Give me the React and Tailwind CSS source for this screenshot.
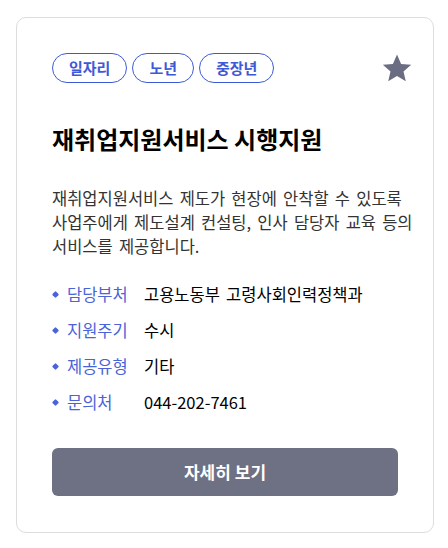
const tags = ['일자리', '노년', '중장년'];

const details = [
  { label: '담당부처', value: '고용노동부 고령사회인력정책과' },
  { label: '지원주기', value: '수시' },
  { label: '제공유형', value: '기타' },
  { label: '문의처', value: '044-202-7461' },
];

export default function App() {
  return (
    <div
      className="min-h-screen bg-white px-4 pt-[17px]"
      style={{ fontFamily: '"Noto Sans CJK KR", "Noto Sans", sans-serif' }}
    >
      <div className="w-[418px] rounded-[10px] border border-[#dddde0] bg-white px-[35px] pt-[35px] pb-[36px]">
        {/* Tags + bookmark */}
        <div className="flex items-start justify-between">
          <div className="flex gap-[5px]">
            {tags.map((tag) => (
              <span
                key={tag}
                className="flex h-[30px] items-center rounded-full border border-[#3d5ad6] px-4 text-[15px] font-semibold text-[#3d5ad6]"
              >
                {tag}
              </span>
            ))}
          </div>
          <svg viewBox="0 0 24 24" className="mr-[-16px] mt-[-2px] h-[34px] w-[34px] fill-[#6b6e82]">
            <path d="M12 2.5l2.9 6.6 7.1.6-5.4 4.7 1.6 7-6.2-3.7-6.2 3.7 1.6-7L2 9.7l7.1-.6z" />
          </svg>
        </div>

        {/* Title */}
        <h1 className="mt-[38px] text-[24px] font-bold leading-[32px] text-black">
          재취업지원서비스 시행지원
        </h1>

        {/* Description */}
        <p className="mt-[31px] w-[366px] break-keep text-[16.5px] leading-[24px] text-[#333] [word-spacing:2.5px]">
          재취업지원서비스 제도가 현장에 안착할 수 있도록 사업주에게 제도설계 컨설팅, 인사 담당자 교육 등의 서비스를 제공합니다.
        </p>

        {/* Details */}
        <ul className="mt-[24px] flex flex-col gap-[12px]">
          {details.map((d) => (
            <li key={d.label} className="flex h-[24px] items-center text-[16.5px] [word-spacing:2.5px]">
              <span className="ml-[1px] mr-[9px] h-[5px] w-[5px] rotate-45 rounded-[1px] bg-[#4a63d8]" />
              <span className="w-[77px] text-[#4a63d8]">{d.label}</span>
              <span className="text-black">{d.value}</span>
            </li>
          ))}
        </ul>

        {/* Action */}
        <button className="mt-[34px] h-[48px] w-full rounded-md bg-[#6e7084] text-[17px] font-bold text-white">
          자세히 보기
        </button>
      </div>
    </div>
  );
}
